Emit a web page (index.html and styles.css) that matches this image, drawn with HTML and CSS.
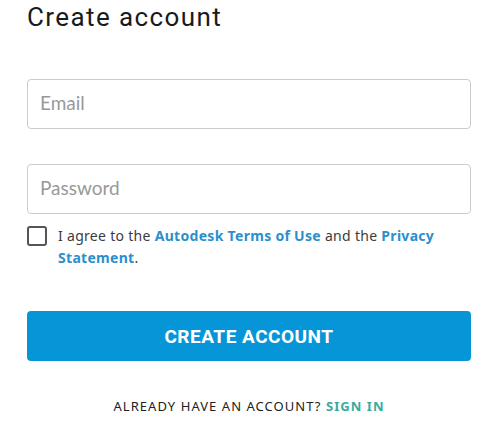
FILE: index.html
```html
<!DOCTYPE html>
<html lang="en">
<head>
<meta charset="utf-8">
<title>Create account</title>
<link rel="stylesheet" href="styles.css">
</head>
<body>
<main class="form">
  <h1 class="title">Create account</h1>
  <input class="field field-email" type="email" placeholder="Email">
  <input class="field field-password" type="password" placeholder="Password">
  <label class="agree">
    <span class="box"></span>
    <span class="agree-text">I agree to the <a href="#" class="link">Autodesk Terms of Use</a> and the <a href="#" class="link">Privacy Statement</a>.</span>
  </label>
  <button class="submit" type="button">CREATE ACCOUNT</button>
  <p class="signin">ALREADY HAVE AN ACCOUNT? <a href="#" class="signin-link">SIGN IN</a></p>
</main>
</body>
</html>
```

FILE: styles.css
```css
html, body {
  margin: 0;
  padding: 0;
  background: #ffffff;
}
body {
  font-family: "Noto Sans", "Open Sans", sans-serif;
  color: #3c3c3c;
}
.form {
  width: 444px;
  margin-left: 27px;
  display: flex;
  flex-direction: column;
}
.title {
  margin: 0;
  padding-top: 1px;
  font-family: Roboto, "Liberation Sans", sans-serif;
  font-weight: 400;
  font-size: 26px;
  line-height: 32px;
  letter-spacing: 1.4px;
  color: #1a1a1a;
}
.field {
  box-sizing: border-box;
  width: 444px;
  height: 50px;
  border: 1px solid #cccccc;
  border-radius: 4px;
  padding: 0 12px 4px;
  font-family: Lato, "Noto Sans", sans-serif;
  font-size: 19px;
  color: #3c3c3c;
  outline: none;
}
.field::placeholder {
  color: #999999;
}
.field-email {
  margin-top: 46px;
}
.field-password {
  margin-top: 35px;
}
.agree {
  display: flex;
  align-items: flex-start;
  margin-top: 11px;
  font-family: "Noto Sans", sans-serif;
  font-size: 14px;
  line-height: 22px;
  color: #3c3c3c;
  letter-spacing: 0.3px;
}
.box {
  flex: none;
  box-sizing: border-box;
  width: 20px;
  height: 20px;
  border: 2px solid #555555;
  border-radius: 3px;
  margin-top: 1px;
  margin-right: 11px;
}
.agree-text {
  flex: 1;
  padding-right: 30px;
}
.link {
  color: #2b8fcb;
  font-weight: 700;
  text-decoration: none;
}
.submit {
  margin-top: 42px;
  height: 50px;
  border: none;
  border-radius: 4px;
  background: #0696d7;
  color: #ffffff;
  font-family: Roboto, "Liberation Sans", sans-serif;
  font-weight: 700;
  font-size: 19px;
  letter-spacing: 0.5px;
  cursor: pointer;
}
.signin {
  margin: 36px 0 0;
  text-align: center;
  font-family: "Noto Sans", sans-serif;
  font-size: 13px;
  line-height: 18px;
  letter-spacing: 1.05px;
  color: #222222;
}
.signin-link {
  color: #38aaa0;
  font-weight: 700;
  text-decoration: none;
}
```
